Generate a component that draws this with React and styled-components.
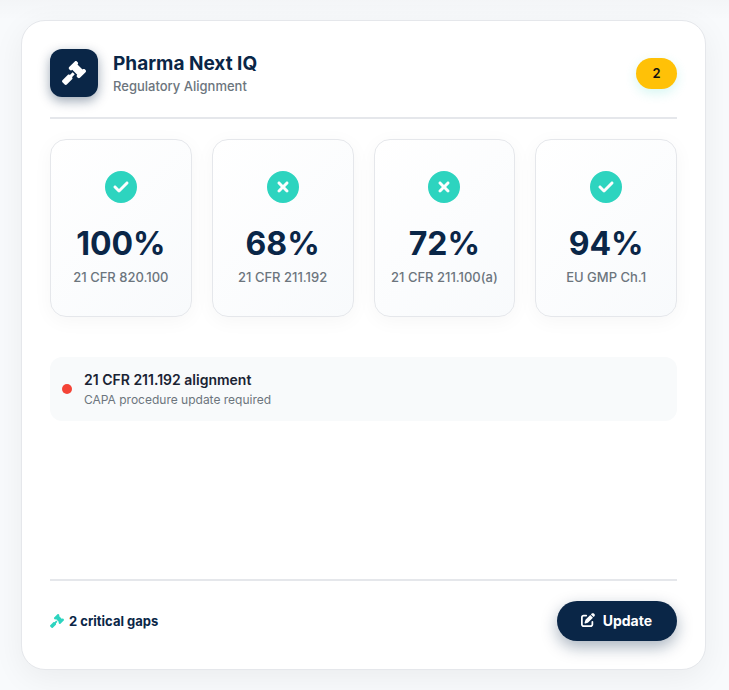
import React from 'react'
import styled, { createGlobalStyle, ThemeProvider } from 'styled-components'
import { FaCircleCheck, FaCircleXmark, FaGavel, FaPenToSquare } from 'react-icons/fa6'

const theme = {
  color: {
    navy: '#0a2647',
    teal: '#2dd4bf',
    amber: '#ffc107',
    red: '#f44336',
    muted: '#6c757d',
    dark: '#1a2333',
    border: '#e5e7eb',
    page: '#f8fafc',
    card: '#ffffff',
  },
  font: "Inter, 'Liberation Sans', sans-serif",
}

const GlobalStyle = createGlobalStyle`
  * {
    box-sizing: border-box;
  }
  body {
    margin: 0;
    background-color: ${theme.color.page};
    font-family: ${theme.font};
  }
  h2, h3, p {
    margin: 0;
  }
`

const Page = styled.main`
  display: flex;
  min-height: 100vh;
  padding: 20px 23px 20px 21px;
  background: linear-gradient(rgba(0, 0, 0, 0.02), transparent 20px);
`
const Card = styled.section`
  display: flex;
  flex: 1;
  flex-direction: column;
  min-width: 0;
  padding: 28px;
  border: 1px solid ${props => props.theme.color.border};
  border-radius: 24px;
  background-color: ${props => props.theme.color.card};
  box-shadow: 0 8px 32px rgba(0, 0, 0, 0.06);
`
const CardHeader = styled.header`
  display: flex;
  align-items: center;
  gap: 15px;
  padding-bottom: 20px;
  border-bottom: 2px solid ${props => props.theme.color.border};
`
const Logo = styled.div`
  display: flex;
  align-items: center;
  justify-content: center;
  width: 48px;
  height: 48px;
  border-radius: 12px;
  background-color: ${props => props.theme.color.navy};
  box-shadow: 0 4px 12px rgba(10, 38, 71, 0.4);
  color: #fff;
  font-size: 24px;
`
const Heading = styled.div`
  flex: 1;
`
const Title = styled.h2`
  color: ${props => props.theme.color.navy};
  font-weight: 700;
  font-size: 19px;
  line-height: 26px;
`
const Subtitle = styled.p`
  color: ${props => props.theme.color.muted};
  font-weight: 500;
  font-size: 13px;
  line-height: 18px;
`
const Badge = styled.span`
  min-width: 41px;
  padding: 8px 16px;
  border-radius: 20px;
  background-color: ${props => props.theme.color.amber};
  box-shadow: 0 4px 12px rgba(45, 212, 191, 0.2);
  color: #111;
  font-weight: 600;
  font-size: 13px;
  line-height: 15px;
  text-align: center;
`
const Metrics = styled.div`
  display: grid;
  grid-template-columns: repeat(4, minmax(0, 1fr));
  gap: 20px;
  margin: 20px 0 40px;
`
const Metric = styled.article`
  display: flex;
  flex-direction: column;
  align-items: center;
  padding: 31px 8px 29px;
  border: 1px solid ${props => props.theme.color.border};
  border-radius: 16px;
  background: linear-gradient(135deg, #ffffff 0%, #f8fafc 100%);
  box-shadow: 0 4px 20px rgba(0, 0, 0, 0.04);
`
const MetricIcon = styled.span`
  display: flex;
  margin-bottom: 20px;
  color: ${props => props.theme.color.teal};
  font-size: 32px;
`
const MetricValue = styled.p`
  color: ${props => props.theme.color.navy};
  font-weight: 700;
  font-size: 32px;
  line-height: 42px;
`
const MetricLabel = styled.p`
  margin-top: 2px;
  color: ${props => props.theme.color.muted};
  font-weight: 500;
  font-size: 13px;
  line-height: 20px;
  white-space: nowrap;
`
const Alert = styled.div`
  display: flex;
  align-items: center;
  gap: 12px;
  padding: 12px;
  border-radius: 12px;
  background-color: #f8fafb;
`
const AlertDot = styled.span`
  width: 10px;
  height: 10px;
  border-radius: 50%;
  background-color: ${props => props.theme.color.red};
`
const AlertTitle = styled.h3`
  color: ${props => props.theme.color.dark};
  font-weight: 600;
  font-size: 14px;
  line-height: 21px;
`
const AlertText = styled.p`
  color: ${props => props.theme.color.muted};
  font-size: 12px;
  line-height: 19px;
`
const CardFooter = styled.footer`
  display: flex;
  align-items: center;
  justify-content: space-between;
  margin-top: auto;
  padding-top: 20px;
  border-top: 2px solid ${props => props.theme.color.border};
`
const Gaps = styled.p`
  display: flex;
  align-items: center;
  gap: 5px;
  color: ${props => props.theme.color.navy};
  font-weight: 700;
  font-size: 13px;
  svg {
    color: ${props => props.theme.color.teal};
    font-size: 14px;
  }
`
const UpdateButton = styled.button`
  display: flex;
  align-items: center;
  gap: 8px;
  height: 40px;
  padding: 0 25px 2px 24px;
  border: none;
  border-radius: 20px;
  background-color: ${props => props.theme.color.navy};
  box-shadow: 0 6px 16px rgba(10, 38, 71, 0.35);
  color: #fff;
  font-weight: 700;
  font-size: 14px;
  font-family: inherit;
  cursor: pointer;
`

const metrics = [
  { value: '100%', label: '21 CFR 820.100', aligned: true },
  { value: '68%', label: '21 CFR 211.192', aligned: false },
  { value: '72%', label: '21 CFR 211.100(a)', aligned: false },
  { value: '94%', label: 'EU GMP Ch.1', aligned: true },
]

const App = () => (
  <ThemeProvider theme={theme}>
    <GlobalStyle />
    <Page>
      <Card>
        <CardHeader>
          <Logo>
            <FaGavel />
          </Logo>
          <Heading>
            <Title>Pharma Next IQ</Title>
            <Subtitle>Regulatory Alignment</Subtitle>
          </Heading>
          <Badge>2</Badge>
        </CardHeader>
        <Metrics>
          {metrics.map(({ value, label, aligned }) => (
            <Metric key={label}>
              <MetricIcon>{aligned ? <FaCircleCheck /> : <FaCircleXmark />}</MetricIcon>
              <MetricValue>{value}</MetricValue>
              <MetricLabel>{label}</MetricLabel>
            </Metric>
          ))}
        </Metrics>
        <Alert>
          <AlertDot />
          <div>
            <AlertTitle>21 CFR 211.192 alignment</AlertTitle>
            <AlertText>CAPA procedure update required</AlertText>
          </div>
        </Alert>
        <CardFooter>
          <Gaps>
            <FaGavel />
            2 critical gaps
          </Gaps>
          <UpdateButton type="button">
            <FaPenToSquare />
            Update
          </UpdateButton>
        </CardFooter>
      </Card>
    </Page>
  </ThemeProvider>
)

export default App
